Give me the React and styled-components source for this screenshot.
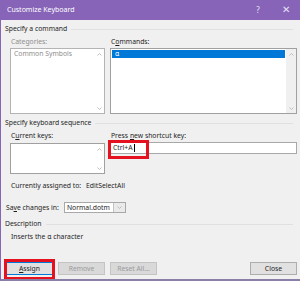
import React from "react";
import styled, { createGlobalStyle } from "styled-components";

const Global = createGlobalStyle`
  html, body { margin: 0; padding: 0; background: #f0f0f0; }
  body { font-family: "Noto Sans", "Open Sans", sans-serif; }
`;

const Window = styled.div`
  width: 300px;
  height: 281px;
  box-sizing: border-box;
  display: flex;
  flex-direction: column;
  background: #f0f0f0;
  border-left: 1px solid #8764b8;
  border-bottom: 2px solid #8a7fa6;
  overflow: hidden;
  font-size: 6.8px;
  line-height: 8px;
  color: #1e1e1e;
`;

const TitleBar = styled.div`
  height: 20px;
  flex: none;
  background: #8764b8;
  color: #fff;
  display: flex;
  align-items: center;
  padding: 0 0 0 6px;
  font-size: 7px;
`;

const Title = styled.span`
  flex: 1;
`;

const TitleBtn = styled.span`
  width: ${(p) => p.$w}px;
  text-align: center;
  font-size: ${(p) => p.$fs}px;
  color: #e8e0f3;
`;

const Body = styled.div`
  flex: 1;
  display: flex;
  flex-direction: column;
  padding: 0 3px 0 4px;
`;

const GroupHeader = styled.div`
  display: flex;
  align-items: center;
  height: 10px;
  margin-top: ${(p) => p.$mt}px;
  &::after {
    content: "";
    flex: 1;
    height: 1px;
    background: #e0e0e0;
    margin: 0 4px 0 4px;
  }
`;

const GroupContent = styled.div`
  padding-left: 5px;
  display: flex;
  flex-direction: column;
`;

const Cols = styled.div`
  display: grid;
  grid-template-columns: 95px 1fr;
  column-gap: 5px;
  margin-top: ${(p) => p.$mt || 0}px;
  align-items: start;
`;

const Label = styled.div`
  height: 8px;
  padding-left: 1px;
  color: ${(p) => (p.$disabled ? "#8d8d8d" : "#1e1e1e")};
  white-space: nowrap;
`;

const U = styled.span`
  text-decoration: underline;
  text-underline-offset: 1px;
`;

const ListBox = styled.div`
  height: ${(p) => p.$h}px;
  margin-top: ${(p) => p.$mt || 0}px;
  box-sizing: border-box;
  border: 1px solid ${(p) => (p.$disabled ? "#b4b4b4" : "#a0a0a0")};
  background: #fff;
  display: flex;
  position: relative;
`;

const ListItems = styled.div`
  flex: 1;
  padding: 1px 1px 0 1px;
  display: flex;
  flex-direction: column;
`;

const Item = styled.div`
  height: 8px;
  padding-left: ${(p) => (p.$selected ? 3 : 2)}px;
  background: ${(p) => (p.$selected ? "#0078d7" : "transparent")};
  color: ${(p) => (p.$selected ? "#fff" : p.$disabled ? "#8d8d8d" : "#1e1e1e")};
  white-space: nowrap;
`;

const ScrollBar = styled.div`
  width: 10px;
  flex: none;
  background: ${(p) => (p.$disabled ? "#fff" : "#f0f0f0")};
  display: flex;
  flex-direction: column;
  justify-content: space-between;
  align-items: center;
  padding: 4px 0 3px;
`;

const Chevron = ({ down }) => (
  <svg width="5" height="3" viewBox="0 0 5 3">
    <path
      d={down ? "M0.5 0.5 L2.5 2.5 L4.5 0.5" : "M0.5 2.5 L2.5 0.5 L4.5 2.5"}
      fill="none"
      stroke="#b8b8b8"
      strokeWidth="0.9"
    />
  </svg>
);

const RightCol = styled.div`
  display: flex;
  flex-direction: column;
`;

const TextBox = styled.div`
  position: relative;
  height: 12px;
  box-sizing: border-box;
  border: 1px solid #a8a8a8;
  background: #fff;
  display: flex;
  align-items: center;
  padding-left: 2px;
`;

const Caret = styled.span`
  display: inline-block;
  width: 1px;
  height: 8px;
  background: #000;
  margin-left: 1px;
`;

const Highlight = styled.div`
  position: absolute;
  left: ${(p) => p.$l}px;
  top: ${(p) => p.$t}px;
  width: ${(p) => p.$w}px;
  height: ${(p) => p.$h}px;
  box-sizing: border-box;
  border: 3px solid #e5111f;
  pointer-events: none;
`;

const InfoRow = styled.div`
  display: grid;
  grid-template-columns: 75px 1fr;
  height: 8px;
  margin-top: ${(p) => p.$mt}px;
  padding-left: 1px;
  white-space: nowrap;
`;

const SaveRow = styled.div`
  display: flex;
  align-items: center;
  gap: 5px;
  margin-top: ${(p) => p.$mt}px;
  padding-left: 1px;
`;

const Select = styled.div`
  width: 62px;
  height: 11px;
  box-sizing: border-box;
  border: 1px solid #a8a8a8;
  background: #fff;
  display: flex;
`;

const SelectValue = styled.div`
  flex: 1;
  padding-left: 2px;
  line-height: 9px;
`;

const SelectArrow = styled.div`
  width: 11px;
  background: #eaeaea;
  border-left: 1px solid #c4c4c4;
  display: flex;
  align-items: center;
  justify-content: center;
`;

const Desc = styled.div`
  height: 8px;
  margin-top: ${(p) => p.$mt}px;
  padding-left: 1px;
`;

const ButtonRow = styled.div`
  display: flex;
  gap: 5px;
  margin-top: auto;
  margin-bottom: 4px;
  padding-left: 1px;
`;

const Button = styled.div`
  position: relative;
  width: ${(p) => p.$w || 47}px;
  height: 13px;
  box-sizing: border-box;
  border: 1px solid ${(p) => (p.$focus ? "#0078d7" : p.$disabled ? "#c4c4c4" : "#adadad")};
  background: ${(p) => (p.$disabled ? "#d9d9d9" : "#e1e1e1")};
  color: ${(p) => (p.$disabled ? "#9a9a9a" : "#1e1e1e")};
  display: flex;
  align-items: center;
  justify-content: center;
  ${(p) => (p.$right ? "margin-left: auto;" : "")}
`;

export default function App() {
  return (
    <>
      <Global />
      <Window>
        <TitleBar>
          <Title>Customize Keyboard</Title>
          <TitleBtn $w={28} $fs={8}>?</TitleBtn>
          <TitleBtn $w={28} $fs={9.5}>✕</TitleBtn>
        </TitleBar>
        <Body>
          <GroupHeader $mt={4}>Specify a command</GroupHeader>
          <GroupContent>
            <Cols $mt={4}>
              <Label $disabled>Categories:</Label>
              <Label>
                C<U>o</U>mmands:
              </Label>
            </Cols>
            <Cols $mt={2}>
              <ListBox $h={66} $disabled>
                <ListItems>
                  <Item $disabled>Common Symbols</Item>
                </ListItems>
                <ScrollBar $disabled>
                  <Chevron />
                  <Chevron down />
                </ScrollBar>
              </ListBox>
              <ListBox $h={66}>
                <ListItems>
                  <Item $selected>α</Item>
                </ListItems>
                <ScrollBar>
                  <Chevron />
                  <Chevron down />
                </ScrollBar>
              </ListBox>
            </Cols>
          </GroupContent>
          <GroupHeader $mt={4}>Specify keyboard sequence</GroupHeader>
          <GroupContent>
            <Cols $mt={4}>
              <Label>
                C<U>u</U>rrent keys:
              </Label>
              <Label>
                Press <U>n</U>ew shortcut key:
              </Label>
            </Cols>
            <Cols $mt={2}>
              <ListBox $h={31} $mt={1}>
                <ListItems />
                <ScrollBar $disabled>
                  <Chevron />
                  <Chevron down />
                </ScrollBar>
              </ListBox>
              <RightCol>
                <TextBox>
                  Ctrl+A
                  <Caret />
                  <Highlight $l={-3} $t={-3} $w={41} $h={19} />
                </TextBox>
              </RightCol>
            </Cols>
            <InfoRow $mt={8}>
              <span>Currently assigned to:</span>
              <span>EditSelectAll</span>
            </InfoRow>
          </GroupContent>
          <SaveRow $mt={12}>
            <span>
              Sa<U>v</U>e changes in:
            </span>
            <Select>
              <SelectValue>Normal.dotm</SelectValue>
              <SelectArrow>
                <Chevron down />
              </SelectArrow>
            </Select>
          </SaveRow>
          <GroupHeader $mt={6}>Description</GroupHeader>
          <GroupContent>
            <Desc $mt={4}>Inserts the α character</Desc>
          </GroupContent>
          <ButtonRow>
            <Button $focus>
              <U>A</U>ssign
              <Highlight $l={-3} $t={-4} $w={51} $h={21} />
            </Button>
            <Button $disabled>Remove</Button>
            <Button $disabled>Reset All...</Button>
            <Button $right>Close</Button>
          </ButtonRow>
        </Body>
      </Window>
    </>
  );
}
